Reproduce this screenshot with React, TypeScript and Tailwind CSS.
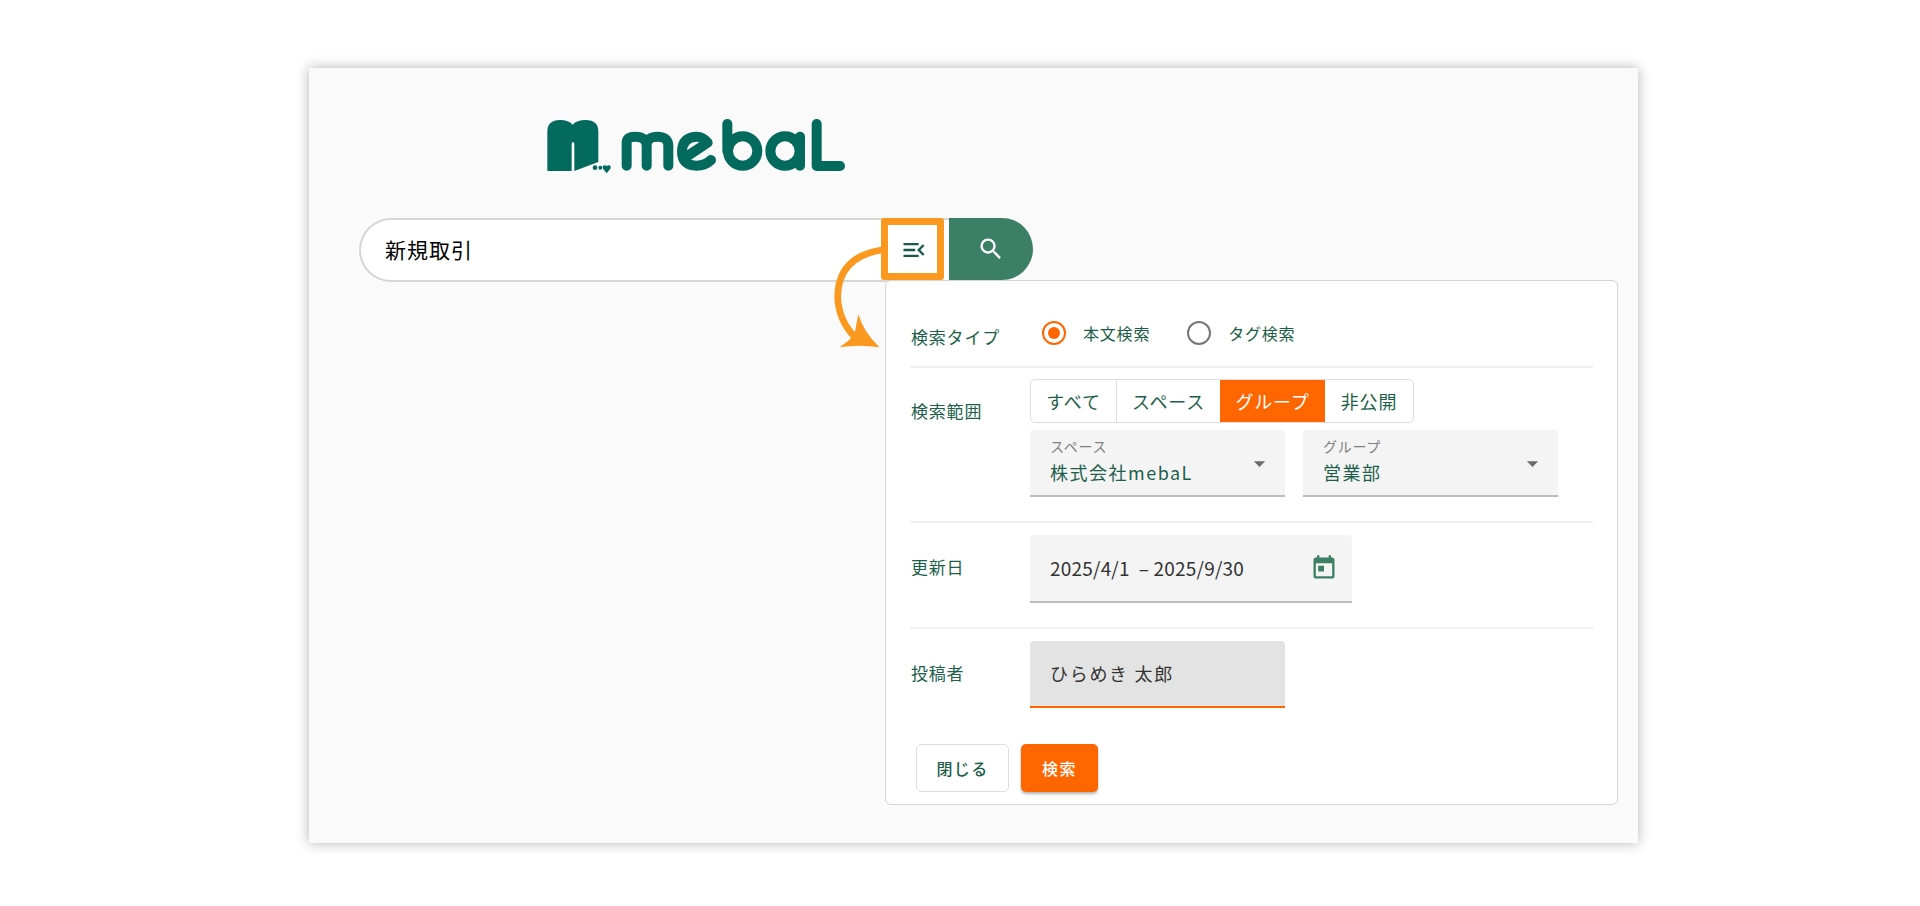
function Logo() {
  return (
    <svg width="360" height="90" viewBox="0 0 1080 270" role="img" aria-label="mebaL logo" className="block">
      <path fill="#046a5e" d="M82 213V95Q82 60 120 60Q146 60 158 74Q170 60 197 60Q235 60 235 95V186L163 213V135Q163 126 159 126Q155 126 155 135V213Z" />
      <circle cx="225" cy="203" r="7" fill="#046a5e" />
      <circle cx="241" cy="203" r="6" fill="#046a5e" />
      <path fill="#046a5e" d="M260 220L249 206Q246 197 254 196Q258 196 260 199Q262 196 266 196Q275 197 271 206Z" />
      <g fill="none" stroke="#046a5e" strokeWidth="30" strokeLinecap="round" strokeLinejoin="round">
        <path d="M320 197V128Q320 110 345 110Q380 110 380 138V197M380 138Q380 110 412 110Q445 110 445 138V197" />
        <path d="M507 165L563 128Q548 109 528 110Q486 113 486 155Q486 197 530 197Q555 197 573 180" />
        <path d="M622 72V153" />
        <circle cx="668" cy="153" r="44" />
        <circle cx="795" cy="153" r="44" />
        <path d="M840 110V197" />
        <path d="M890 72V198H960" />
      </g>
    </svg>
  );
}

function Label({ children, className = "" }: { children: React.ReactNode; className?: string }) {
  return <div className={"w-[120px] shrink-0 pl-px text-[17px] leading-6 tracking-[0.8px] text-[#1d5f4a] " + className}>{children}</div>;
}

function Arrow() {
  return (
    <svg width="27" height="27" viewBox="0 0 24 24" fill="#6b6b6b" className="mt-[2px] shrink-0">
      <path d="M7 10l5 5 5-5z" />
    </svg>
  );
}

function SelectField({ label, value }: { label: string; value: string }) {
  return (
    <div className="flex h-[67px] w-[255px] items-center justify-between rounded-t-[4px] border-b-2 border-[#bdbdbd] bg-[#f4f4f4] pl-5 pr-[12px]">
      <div className="mb-[4px] flex flex-col">
        <span className="text-[14px] leading-[18px] tracking-[0.7px] text-[#808080]">{label}</span>
        <span className="mt-[4px] text-[18px] leading-[26px] tracking-[1.5px] text-[#1d5f4a]">{value}</span>
      </div>
      <Arrow />
    </div>
  );
}

function Radio({ on, label }: { on?: boolean; label: string }) {
  return (
    <div className="flex items-center gap-[17px]">
      <span className={"flex h-6 w-6 items-center justify-center rounded-full border-2 " + (on ? "border-[#ff6600]" : "border-[#777777]")}>
        {on && <span className="h-3 w-3 rounded-full bg-[#ff6600]" />}
      </span>
      <span className="text-[16px] leading-6 tracking-[0.8px] text-[#1d5f4a]">{label}</span>
    </div>
  );
}

export default function App() {
  return (
    <div className="h-[906px] w-full overflow-hidden bg-white pl-[309px] pt-[68px]" style={{ fontFamily: '"Noto Sans CJK JP", "Noto Sans", sans-serif' }}>
      <div className="relative h-[775px] w-[1329px] bg-[#fafafa] pl-[50px] pt-[32px] shadow-[0_0_12px_rgba(0,0,0,0.3)]">
        <div className="ml-[161px] h-[90px]"><Logo /></div>
        <div className="mt-[28px] flex h-[62px] items-start">
          <div className="flex h-[64px] w-[590px] items-center rounded-l-[32px] border-2 border-r-0 border-[#d6d6d6] bg-white pl-[24px] text-[21px] tracking-[1px] text-black">
            新規取引
          </div>
          <div className="flex h-[62px] w-[84px] items-center justify-center rounded-r-[31px] bg-[#3b8066]">
            <svg width="28" height="28" viewBox="0 0 24 24" fill="#ffffff"><path d="M15.5 14h-.79l-.28-.27C15.41 12.59 16 11.11 16 9.5 16 5.91 13.09 3 9.5 3S3 5.91 3 9.5 5.91 16 9.5 16c1.61 0 3.09-.59 4.23-1.57l.27.28v.79l5 4.99L20.49 19l-4.99-5zm-6 0C7.01 14 5 11.99 5 9.5S7.01 5 9.5 5 14 7.01 14 9.5 11.99 14 9.5 14z" /></svg>
          </div>
        </div>

        <div className="relative ml-[526px] h-[525px] w-[733px] rounded-[6px] border border-[#d4d4d4] bg-white px-[24px]">
          <div className="flex h-[87px] items-center border-b-2 border-[#f0f0f0] pt-[18px]">
            <Label className="mt-[8px]">検索タイプ</Label>
            <div className="ml-[12px] flex gap-[37px]">
              <Radio on label="本文検索" />
              <Radio label="タグ検索" />
            </div>
          </div>

          <div className="flex h-[155px] border-b-2 border-[#f0f0f0] pt-[11px]">
            <Label className="mt-[20px]">検索範囲</Label>
            <div className="flex flex-col gap-[7px]">
              <div className="flex h-[44px] w-fit overflow-hidden rounded-[5px] border border-[#dedede] text-[18px] tracking-[0.8px] text-[#1d5f4a]">
                <span className="flex w-[86px] items-center justify-center border-r border-[#dedede]">すべて</span>
                <span className="flex w-[103px] items-center justify-center">スペース</span>
                <span className="flex w-[105px] items-center justify-center bg-[#ff6600] text-white">グループ</span>
                <span className="flex w-[88px] items-center justify-center">非公開</span>
              </div>
              <div className="flex gap-[18px]">
                <SelectField label="スペース" value="株式会社mebaL" />
                <SelectField label="グループ" value="営業部" />
              </div>
            </div>
          </div>

          <div className="flex h-[106px] items-start border-b-2 border-[#f0f0f0] pt-[12px]">
            <Label className="mt-[20px]">更新日</Label>
            <div className="flex h-[68px] w-[322px] items-center justify-between rounded-t-[4px] border-b-2 border-[#bdbdbd] bg-[#f4f4f4] pl-5 pr-[14px]">
              <span className="text-[19px] tracking-[0.2px] text-[#333333]">2025/4/1&nbsp; – 2025/9/30</span>
              <svg width="28" height="28" viewBox="0 0 24 24" fill="#3b8066"><path d="M19 3h-1V1h-2v2H8V1H6v2H5c-1.11 0-1.99.9-1.99 2L3 19c0 1.1.89 2 2 2h14c1.1 0 2-.9 2-2V5c0-1.1-.9-2-2-2zm0 16H5V8h14v11zM7 10h5v5H7z" /></svg>
            </div>
          </div>

          <div className="flex items-start pt-[12px]">
            <Label className="mt-[20px]">投稿者</Label>
            <div className="flex h-[67px] w-[255px] items-center rounded-t-[4px] border-b-2 border-[#ff6600] bg-[#e3e3e3] pl-5 text-[18px] tracking-[1.7px] text-[#333333]">
              ひらめき 太郎
            </div>
          </div>

          <div className="ml-[6px] mt-[36px] flex gap-[12px]">
            <button className="flex h-[48px] w-[93px] items-center justify-center rounded-[5px] border border-[#dedede] bg-white text-[16px] font-medium tracking-[1.4px] text-[#1d5f4a]">閉じる</button>
            <button className="flex h-[48px] w-[77px] items-center justify-center rounded-[5px] bg-[#ff6600] text-[16px] font-medium tracking-[1.6px] text-white shadow-[0_2px_3px_rgba(0,0,0,0.3)]">検索</button>
          </div>
        </div>

        {/* highlight box over the menu button */}
        <div className="absolute left-[572px] top-[150px] flex h-[62px] w-[63px] items-center justify-center rounded-[3px] border-[7px] border-[#fb981f] bg-white pl-[2px] pt-[2px]">
          <svg width="28" height="28" viewBox="0 0 24 24" fill="#17594a"><path d="M3 18h13v-2H3v2zm0-5h10v-2H3v2zm0-7v2h13V6H3zm18 9.59L17.42 12 21 8.41 19.59 7l-5 5 5 5L21 15.59z" /></svg>
        </div>

        {/* curved annotation arrow */}
        <svg className="pointer-events-none absolute left-[491px] top-[132px]" width="100" height="170" viewBox="0 0 300 510">
          <path d="M245 150Q115 170 113 290Q115 360 165 412" fill="none" stroke="#fb981f" strokeWidth="20" />
          <path d="M119 442Q145 425 163 405L175 343Q190 395 238 442Q175 432 119 442Z" fill="#fb981f" />
        </svg>
      </div>
    </div>
  );
}
